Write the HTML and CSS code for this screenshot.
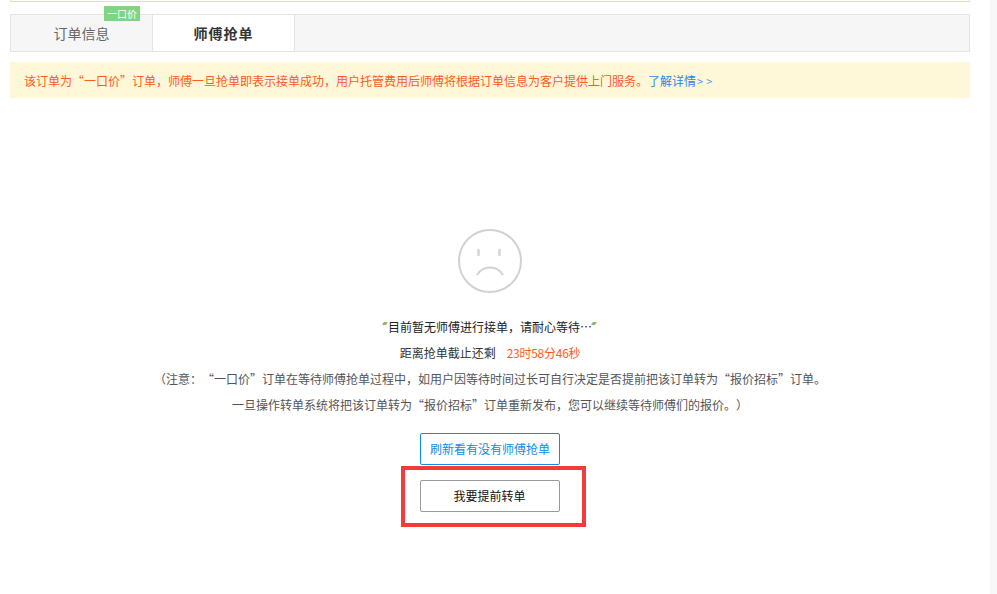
FILE: index.html
```html
<!DOCTYPE html>
<html lang="zh-CN">
<head>
  <meta charset="UTF-8">
  <title>师傅抢单</title>
  <link rel="stylesheet" href="styles.css">
</head>
<body>
  <div class="page">
    <main class="content">
      <div class="top-line"></div>
      <div class="tabs">
        <div class="tab">订单信息<span class="badge">一口价</span></div>
        <div class="tab active">师傅抢单</div>
      </div>
      <p class="notice">该订单为“一口价”订单，师傅一旦抢单即表示接单成功，用户托管费用后师傅将根据订单信息为客户提供上门服务。<a class="more" href="#">了解详情<span class="arrows">&gt;&gt;</span></a></p>
      <section class="waiting">
        <svg class="face" width="64" height="64" viewBox="0 0 64 64">
          <circle cx="32" cy="32" r="31" fill="none" stroke="#d2d2d2" stroke-width="2"/>
          <path d="M20.500 21v5M41.500 21v5" fill="none" stroke="#d6d6d6" stroke-width="2.600" stroke-linecap="round"/>
          <path d="M19 46c3-5 8-7.500 13-7.500s10 2.500 13 7.500" fill="none" stroke="#d2d2d2" stroke-width="2"/>
        </svg>
        <p class="line title"><i class="mark"></i>目前暂无师傅进行接单，请耐心等待…<i class="mark"></i></p>
        <p class="line">距离抢单截止还剩<span class="timer">23时58分46秒</span></p>
        <p class="line grey">（注意：“一口价”订单在等待师傅抢单过程中，如用户因等待时间过长可自行决定是否提前把该订单转为“报价招标”订单。</p>
        <p class="line grey">一旦操作转单系统将把该订单转为“报价招标”订单重新发布，您可以继续等待师傅们的报价。）</p>
        <a class="btn btn-blue" href="#">刷新看有没有师傅抢单</a>
        <div class="highlight">
          <a class="btn btn-grey" href="#">我要提前转单</a>
        </div>
      </section>
    </main>
    <div class="side-strip"></div>
  </div>
</body>
</html>
```

FILE: styles.css
```css
* { box-sizing: border-box; }
html, body { height: 100%; }
body {
  margin: 0;
  background: #fff;
  color: #333;
  font-family: "Noto Sans CJK SC", "Liberation Sans", sans-serif;
  font-size: 12px;
  overflow: hidden;
}
.page { display: flex; height: 594px; }
.content { width: 990px; padding: 0 20px 0 10px; }
.side-strip { width: 7px; background: #f8f8f8; }

.top-line {
  height: 2px;
  border: 1px solid #e5e0c0;
  border-top: 0;
}

.tabs {
  display: flex;
  height: 38px;
  margin-top: 12px;
  background: #f6f6f6;
  border: 1px solid #e4e4e4;
}
.tab {
  position: relative;
  width: 141px;
  line-height: 36px;
  text-align: center;
  font-size: 14px;
  color: #666;
}
.tab.active {
  width: 143px;
  background: #fff;
  border-left: 1px solid #e4e4e4;
  border-right: 1px solid #e4e4e4;
  color: #333;
  font-weight: 700;
  letter-spacing: 1px;
}
.badge {
  position: absolute;
  top: -9px;
  left: 93px;
  width: 36px;
  height: 15px;
  background: #7fd585;
  color: #fff;
  font-size: 10px;
  line-height: 15px;
  font-weight: 400;
}

.notice {
  margin: 10px 0 0;
  height: 36px;
  padding: 1px 0 0 14px;
  background: #fff8d8;
  color: #ff5a1f;
  line-height: 36px;
  white-space: nowrap;
}
.more { color: #2a88e6; text-decoration: none; }
.arrows { margin-left: 1px; letter-spacing: 3px; font-size: 11px; color: #4c9ee8; }

.waiting {
  display: flex;
  flex-direction: column;
  align-items: center;
  padding-top: 131px;
}
.face { display: block; margin-bottom: 21px; }
.line { margin: 0; height: 26px; line-height: 26px; white-space: nowrap; color: #333; }
.line.title { color: #222; }
.line.grey { color: #555; text-spacing-trim: space-all; }
.mark {
  display: inline-block;
  width: 4px;
  height: 3px;
  margin-right: 1px;
  vertical-align: 7px;
  background: linear-gradient(90deg, #6fa8dc, #8cc63f 60%, #e0a050);
  transform: skewX(-30deg);
}
.timer { margin-left: 11px; color: #ff5a1f; letter-spacing: -0.25px; }

.btn {
  display: block;
  width: 140px;
  border-radius: 2px;
  text-align: center;
  text-decoration: none;
}
.btn-blue {
  height: 32px;
  margin-top: 15px;
  border: 1px solid #0e8de6;
  color: #0e8de6;
  line-height: 30px;
}
.highlight {
  width: 185px;
  height: 61px;
  margin: 1px 0 0 6px;
  padding: 10px 0 0 15px;
  border: 4px solid #f53a3a;
}
.btn-grey {
  height: 32px;
  border: 1px solid #999;
  color: #111;
  line-height: 30px;
}
```
